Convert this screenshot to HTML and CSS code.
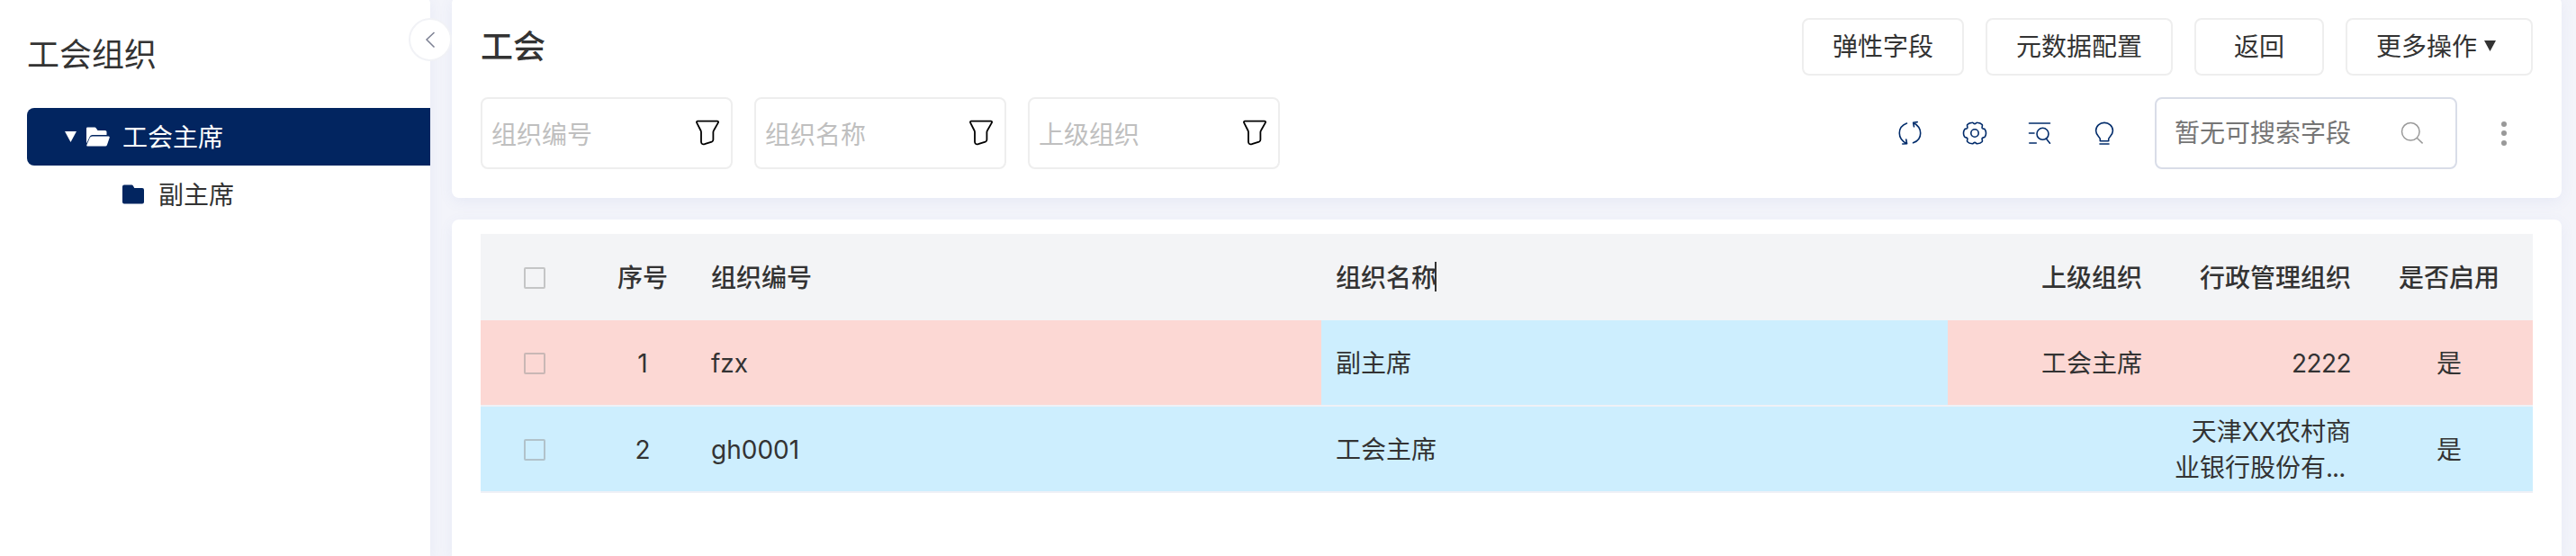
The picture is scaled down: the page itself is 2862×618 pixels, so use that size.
FILE: index.html
```html
<!DOCTYPE html>
<html lang="zh-CN">
<head>
<meta charset="utf-8">
<title>工会</title>
<link rel="stylesheet" href="styles.css">
</head>
<body>
<svg class="sprite" aria-hidden="true">
  <symbol id="funnel" viewBox="0 0 28 30">
    <path d="M3.2 2.7H24.8C26 2.7 26.4 3.6 25.9 4.4L21 13Q20.4 14 20.4 15V23.2Q20.4 25 18.8 25.6L10.8 28.2C8.400 28.900 7 27.600 7 25.500V15Q7 14 6.500 13L2.100 4.400C1.600 3.500 2.200 2.700 3.200 2.700Z" fill="none" stroke="#000" stroke-width="1.800" stroke-linejoin="round"/>
  </symbol>
</svg>
<div class="app">
  <aside class="sidebar">
    <h2 class="side-title">工会组织</h2>
    <div class="node node-active">
      <svg class="caret" width="13" height="12" viewBox="0 0 13 12"><path d="M0 0H13L6.500 12Z" fill="currentColor"/></svg>
      <svg class="folder-open" width="28" height="22" viewBox="0 0 28 22"><path d="M1 18.500V1.800Q1 .5 2.300 .5H10.200Q11.200 .5 11.800 1.400L13.600 4H21.800Q23.500 4 23.500 5.600V9H7.600Q5.600 9 4.800 10.700Z" fill="currentColor"/><path d="M7.700 10.500H25.700Q27.200 10.500 26.700 12L24 20Q23.500 21.500 22 21.500H2.200Q.9 21.500 1.300 20.200L4.700 12.300Q5.500 10.500 7.700 10.500Z" fill="currentColor"/></svg>
      <span>工会主席</span>
    </div>
    <div class="node node-child">
      <svg class="folder" width="24" height="22" viewBox="0 0 24 22"><path d="M2 .5H10.300Q11.300 .5 11.900 1.500L13.300 4H22Q24 4 24 6V19.500Q24 21.500 22 21.500H2Q0 21.500 0 19.500V2.500Q0 .5 2 .5Z" fill="#022560"/></svg>
      <span>副主席</span>
    </div>
    <button class="collapse" aria-label="收起"><svg width="12" height="20" viewBox="0 0 12 20"><path d="M10.500 2L2 10L10.500 18.500" fill="none" stroke="#7c8093" stroke-width="1.500"/></svg></button>
  </aside>
  <main class="main">
    <section class="card toolbar">
      <div class="bar bar-top">
        <h1 class="title">工会</h1>
        <div class="buttons">
          <button class="btn">弹性字段</button>
          <button class="btn">元数据配置</button>
          <button class="btn">返回</button>
          <button class="btn btn-more">更多操作<svg class="more-caret" width="13" height="12" viewBox="0 0 13 12"><path d="M0 0H13L6.500 12Z" fill="#333"/></svg></button>
        </div>
      </div>
      <div class="bar">
        <div class="filters">
          <div class="filter"><span>组织编号</span><svg width="28" height="30"><use href="#funnel"/></svg></div>
          <div class="filter"><span>组织名称</span><svg width="28" height="30"><use href="#funnel"/></svg></div>
          <div class="filter"><span>上级组织</span><svg width="28" height="30"><use href="#funnel"/></svg></div>
        </div>
        <div class="tools">
          <div class="icons">
            <svg width="28" height="28" viewBox="0 0 28 28"><path d="M10.500 3C5 5 2.300 9 2.300 14C2.300 18.500 4.500 22.300 10 25.500M5.800 26L10.600 25.700L9.800 21M17.500 24.800C23 23 25.700 19 25.700 14C25.700 9.500 23.500 5.500 18 2.500M22.200 1.600L17.700 2.300L18.500 6.800"/></svg>
            <svg width="28" height="28" viewBox="0 0 28 28"><path d="M11.300 2.200C12.300 2 12.700 3.600 14 3.600S15.700 2 16.700 2.200C19 2.400 21 3.200 22.200 4.600C23 5.600 21.700 7 22.200 8.300C22.800 9.500 24.900 8.800 25.500 10.100C26.900 12.800 26.900 15.200 25.500 17.900C24.900 19.200 22.800 18.500 22.200 19.700C21.700 21 23 22.400 22.200 23.400C21 24.800 19 25.600 16.700 25.800C15.700 26 15.300 24.400 14 24.400S12.300 26 11.300 25.800C9 25.600 7 24.800 5.800 23.400C5 22.400 6.300 21 5.800 19.700C5.200 18.500 3.100 19.200 2.500 17.900C1.100 15.200 1.100 12.800 2.500 10.100C3.100 8.800 5.200 9.500 5.800 8.300C6.300 7 5 5.600 5.800 4.600C7 3.200 9 2.400 11.300 2.200Z"/><circle cx="14" cy="14" r="4.200"/></svg>
            <svg width="28" height="28" viewBox="0 0 28 28"><path d="M2.500 3H25.500M2.500 14H8M2.800 25H10.300M21.500 20.300L25.500 25.200"/><circle cx="17.500" cy="14.800" r="6.500"/></svg>
            <svg width="28" height="28" viewBox="0 0 28 28"><path d="M9.300 22.800V20.500C9.300 18.300 4.600 16.800 4.600 11.300C4.600 6 9 2.400 14 2.400S23.400 6 23.400 11.300C23.400 16.800 18.700 18.300 18.700 20.500V22.800ZM9 26H19"/></svg>
          </div>
          <div class="search"><span>暂无可搜索字段</span><svg width="26" height="26" viewBox="0 0 26 26"><circle cx="11.300" cy="11.300" r="9.800"/><path d="M18.200 18.200L24.600 24.400"/></svg></div>
          <div class="dots"><i></i><i></i><i></i></div>
        </div>
      </div>
    </section>
    <section class="card content">
      <div class="table">
        <div class="row head">
          <div class="mid"><b class="check"></b></div><div class="mid">序号</div><div>组织编号</div>
          <div><span class="editing">组织名称</span></div>
          <div class="end">上级组织</div><div class="end">行政管理组织</div><div class="mid">是否启用</div>
        </div>
        <div class="row row-alert">
          <div class="mid"><b class="check"></b></div><div class="mid">1</div><div>fzx</div>
          <div class="marked">副主席</div>
          <div class="end">工会主席</div><div class="end"><span class="number">2222</span></div><div class="mid">是</div>
        </div>
        <div class="row row-info">
          <div class="mid"><b class="check"></b></div><div class="mid">2</div><div>gh0001</div>
          <div>工会主席</div>
          <div class="end"></div><div class="end"><p class="two-line">天津<span class="masked">XX</span>农村商<br>业银行股份有<span class="ellipsis">...</span></p></div><div class="mid">是</div>
        </div>
      </div>
    </section>
  </main>
</div>
</body>
</html>
```

FILE: styles.css
```css
* { box-sizing: border-box; }
body {
  margin: 0;
  height: 618px;
  overflow: hidden;
  background: #f3f4fa;
  color: #333;
  font: 28px/40px Inter, "Noto Sans CJK SC", sans-serif;
}
svg { display: block; flex: none; }
.sprite { position: absolute; width: 0; height: 0; }
.app { display: flex; gap: 24px; height: 618px; padding-right: 16px; }

.sidebar {
  position: relative;
  flex: none;
  width: 478px;
  margin-top: -4px;
  padding: 41px 0 0 30px;
  background: #fff;
  border-radius: 0 8px 0 0;
  box-shadow: 0 4px 16px rgba(90, 110, 190, .08);
}
.side-title { margin: 0 0 35px; font-size: 36px; font-weight: 400; line-height: 48px; }
.node { display: flex; align-items: center; height: 64px; }
.node span { padding-top: 2px; }
.node-active { padding-left: 42px; color: #fff; background: #022560; border-radius: 8px 0 0 8px; }
.folder-open { margin: 0 13px 0 10px; }
.node-child { padding-left: 106px; }
.folder { margin-right: 16px; }
.collapse {
  position: absolute;
  top: 24px;
  right: -24px;
  display: grid;
  place-items: center;
  width: 48px;
  height: 48px;
  padding: 0;
  background: #fff;
  border: 2px solid #f1f2f6;
  border-radius: 50%;
}

.main { flex: 1; display: flex; flex-direction: column; gap: 24px; min-width: 0; margin-top: -4px; }
.card { padding: 0 32px; background: #fff; border-radius: 8px; box-shadow: 0 4px 16px rgba(90, 110, 190, .08); }
.toolbar { flex: none; height: 224px; padding-top: 24px; }
.bar { display: flex; justify-content: space-between; align-items: center; }
.bar-top { height: 64px; margin-bottom: 24px; }
.title { margin: 0; font-size: 36px; font-weight: 500; line-height: 48px; }
.buttons { display: flex; gap: 24px; }
.btn {
  display: flex;
  align-items: center;
  justify-content: center;
  min-width: 144px;
  height: 64px;
  padding: 0 32px;
  color: #333;
  background: #fff;
  border: 2px solid #eee;
  border-radius: 8px;
  font: inherit;
}
.btn-more { justify-content: flex-start; width: 208px; }
.more-caret { margin: 0 0 3px 8px; }

.filters { display: flex; gap: 24px; }
.filter {
  display: flex;
  align-items: center;
  justify-content: space-between;
  width: 280px;
  height: 80px;
  padding: 3px 12px 0 10px;
  border: 2px solid #eee;
  border-radius: 8px;
  color: #bfbfbf;
}
.filter svg { margin-bottom: 5px; }

.tools { display: flex; align-items: center; }
.icons { display: flex; gap: 44px; margin-right: 42px; }
.icons svg { fill: none; stroke: #022c6b; stroke-width: 1.600; stroke-linecap: round; stroke-linejoin: round; }
.search {
  display: flex;
  align-items: center;
  justify-content: space-between;
  width: 336px;
  height: 80px;
  padding: 0 35px 0 20px;
  border: 2px solid #d9dde8;
  border-radius: 8px;
  color: #757575;
}
.search svg { fill: none; stroke: #999; stroke-width: 1.500; }
.dots { display: flex; flex-direction: column; gap: 4.500px; margin: 0 29px 0 49px; }
.dots i { width: 6px; height: 6px; border-radius: 50%; background: #999; }

.content { flex: 1; padding-top: 16px; border-radius: 8px 8px 0 0; }
.row {
  display: grid;
  grid-template-columns: 120px 120px 694px 696px 232px 232px 186px;
  height: 96px;
  border-bottom: 2px solid #eff1f6;
}
.row > div { display: flex; align-items: center; padding: 2px 16px 0; }
.row > .mid { justify-content: center; padding: 2px 0 0; }
.row > .end { justify-content: flex-end; text-align: right; }
.head { background: #f3f4f6; border-bottom: 0; font-weight: 500; }
.row-alert { background: #fcd8d4; }
.row-info, .row .marked { background: #cdeefe; }
.row-alert, .row-info { background-clip: padding-box; }
.check { width: 24px; height: 24px; border: 2px solid rgba(150, 150, 150, .5); border-radius: 2px; }
.editing { position: relative; }
.editing::after {
  content: "";
  position: absolute;
  top: 2px;
  right: 0;
  width: 2px;
  height: 33px;
  background: #333;
}
.number { letter-spacing: -.6px; }
.two-line { margin: 0; white-space: nowrap; }
.masked { letter-spacing: -.5px; }
.ellipsis { display: inline-block; width: 28px; text-align: left; letter-spacing: -1px; }
```
